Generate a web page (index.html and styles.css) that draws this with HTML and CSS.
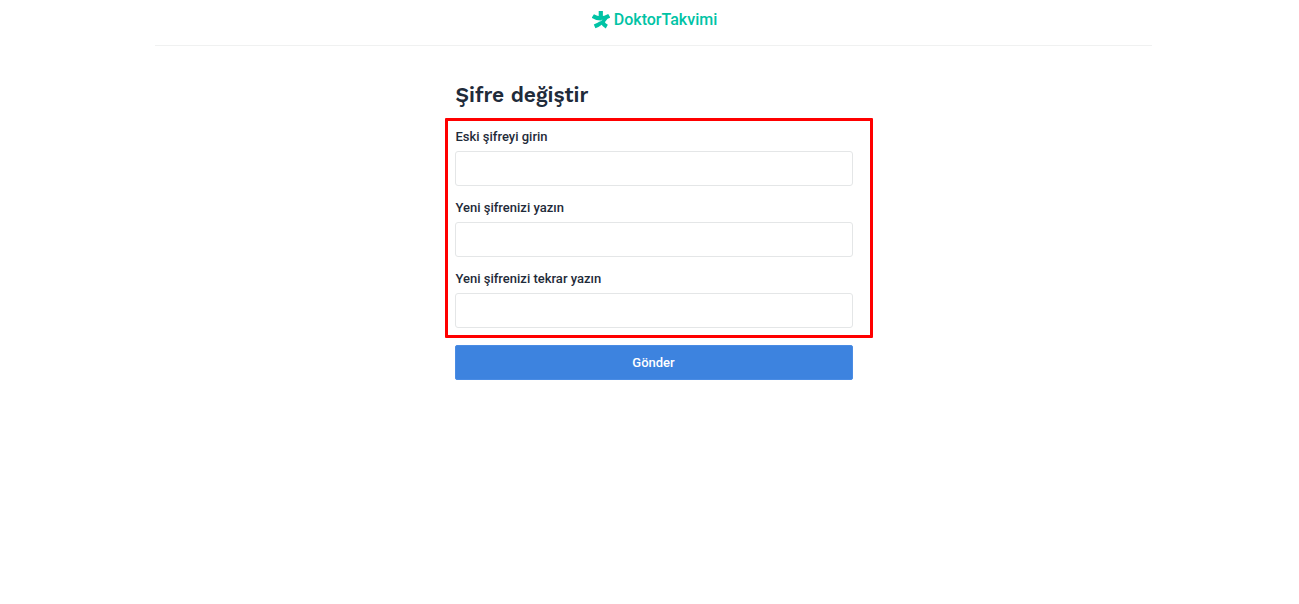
FILE: index.html
```html
<!DOCTYPE html>
<html lang="tr">
<head>
<meta charset="utf-8">
<meta name="viewport" content="width=device-width, initial-scale=1">
<title>Şifre değiştir</title>
<link rel="stylesheet" href="styles.css">
</head>
<body>
<header class="header">
  <a class="brand" href="#">
    <svg class="brand-icon" viewBox="0 0 18 18" aria-hidden="true">
      <g fill="none" stroke="currentColor" stroke-width="4.2">
        <path d="M8.8 0V7"/>
        <path d="M0.8 5Q8.5 10 17.3 4.8"/>
        <path d="M13.8 6.6Q10 12.4 2.6 15.4"/>
        <path d="M10.4 11Q11.6 13.8 14.8 15.6"/>
      </g>
      <path d="M4.6 11.3Q8.2 10.6 10.2 8.9" fill="none" stroke="#fff" stroke-width=".6"/>
    </svg>
    <span>DoktorTakvimi</span>
  </a>
</header>
<main class="content">
  <h1 class="title">Şifre değiştir</h1>
  <form class="form">
    <div class="fields">
      <div class="field">
        <label for="old">Eski şifreyi girin</label>
        <input id="old" type="password">
      </div>
      <div class="field">
        <label for="new">Yeni şifrenizi yazın</label>
        <input id="new" type="password">
      </div>
      <div class="field">
        <label for="repeat">Yeni şifrenizi tekrar yazın</label>
        <input id="repeat" type="password">
      </div>
    </div>
    <button class="submit" type="submit">Gönder</button>
  </form>
</main>
</body>
</html>
```
FILE: styles.css
```css
* {
  box-sizing: border-box;
}

body {
  margin: 0;
  padding: 0 0 0 8px;
  background: #fff;
  color: #1f2b3a;
  font: 500 13px/20px Roboto, "Noto Sans", sans-serif;
}

.header {
  display: flex;
  justify-content: center;
  max-width: 997px;
  margin: 0 auto;
  padding: 10px 0 15px;
  border-bottom: 1px solid #f0f1f1;
}

.brand {
  display: flex;
  align-items: center;
  gap: 4px;
  padding-left: 2px;
  color: #00c3a5;
  font: 500 16px/20px Roboto, "Noto Sans", sans-serif;
  text-decoration: none;
}

.brand-icon {
  width: 18px;
  height: 18px;
}

.content {
  max-width: 398px;
  margin: 0 auto;
  padding-top: 35px;
}

.title {
  margin: 0 0 18px;
  padding-left: 1px;
  font: 600 21px/28px "Work Sans", Inter, sans-serif;
}

.form {
  display: flex;
  flex-direction: column;
  gap: 17px;
}

.fields {
  position: relative;
  display: flex;
  flex-direction: column;
  gap: 12px;
}

.fields::after {
  content: "";
  position: absolute;
  inset: -9px -20px -10px -10px;
  border: 3px solid #f00;
  border-radius: 1px;
  pointer-events: none;
}

.field {
  display: flex;
  flex-direction: column;
  gap: 4px;
}

.field label {
  padding-left: 1px;
}

.field input {
  width: 100%;
  height: 35px;
  padding: 0 10px;
  border: 1px solid #e4e6e7;
  border-radius: 3px;
  background: #fff;
  font: inherit;
}

.submit {
  height: 35px;
  border: 1px solid #4a8ce4;
  border-radius: 2px;
  background: #3d83df;
  color: #fff;
  font: inherit;
}
```
